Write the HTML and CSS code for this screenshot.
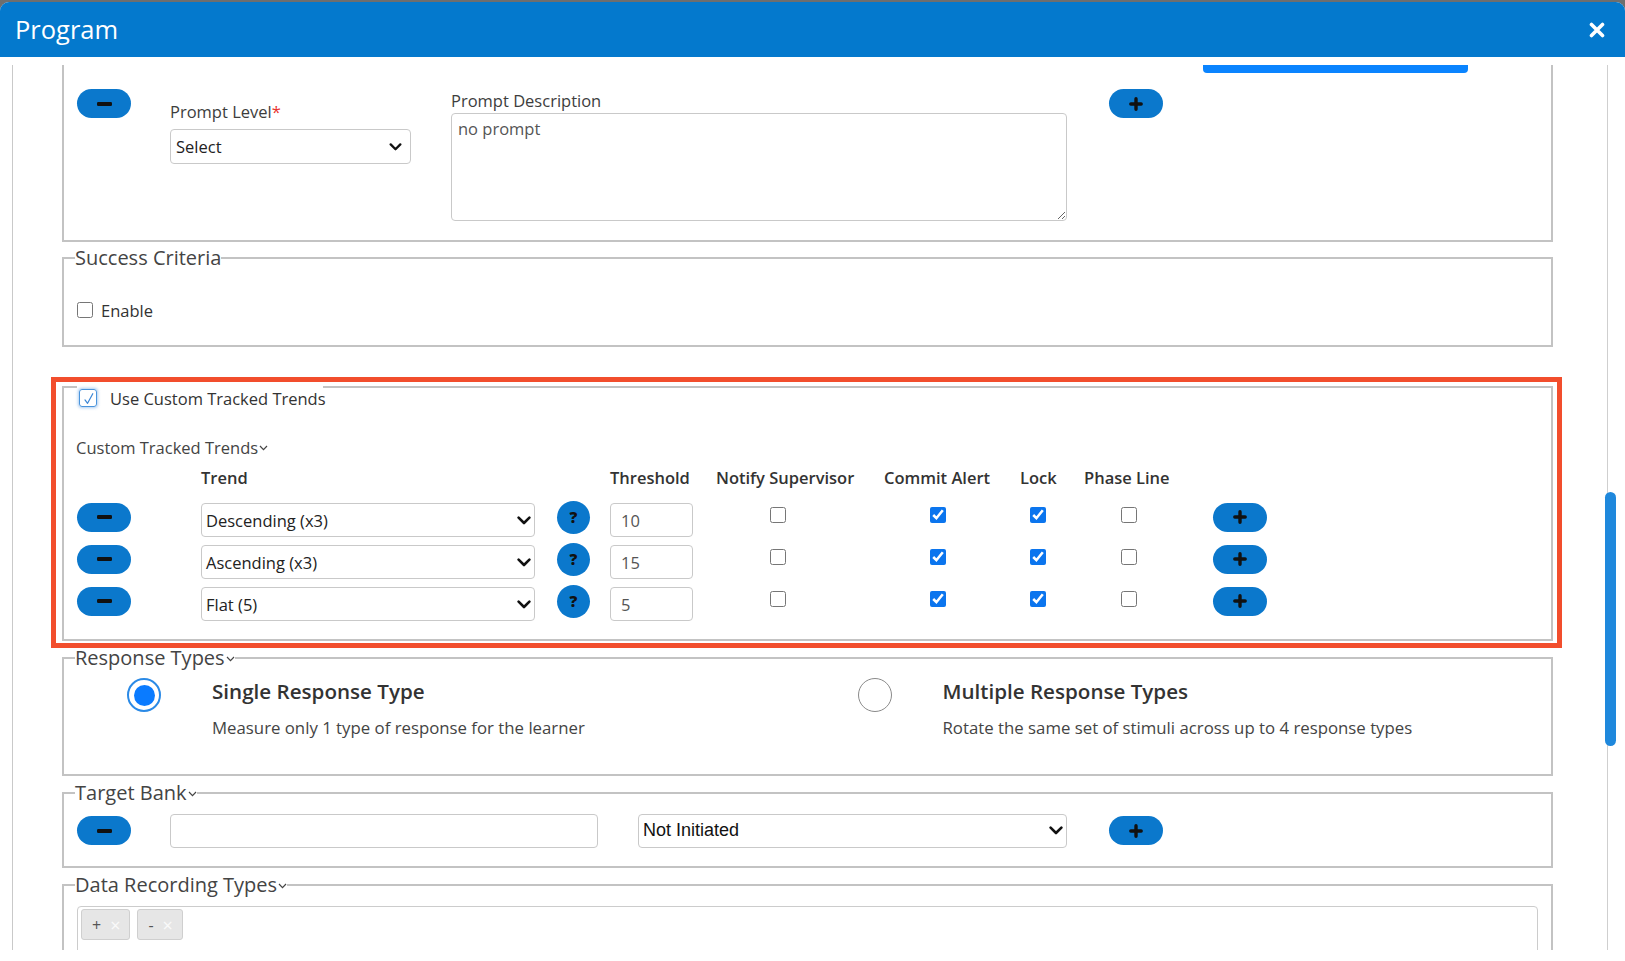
FILE: index.html
```html
<!DOCTYPE html>
<html lang="en">
<head>
<meta charset="utf-8">
<title>Program</title>
<link rel="stylesheet" href="styles.css">
</head>
<body>
<div class="modal">
  <header class="modal-header">
    <h1 class="modal-title">Program</h1>
    <button class="close-btn" aria-label="Close">
      <svg width="16" height="16" viewBox="0 0 16 16"><path d="M2.5 2.5 L13.5 13.5 M13.5 2.5 L2.5 13.5" stroke="#fff" stroke-width="3.6" stroke-linecap="round" fill="none"/></svg>
    </button>
  </header>
  <div class="modal-body">
    <div class="viewport">
      <div class="content">

        <fieldset class="fs fs-cut">
          <div class="prompt-row">
            <button class="pill-btn btn-minus-top"><svg class="ico" width="15" height="4" viewBox="0 0 15 4"><rect x="0" y="0" width="15" height="4" rx="1.2" fill="#111"/></svg></button>
            <div class="field field-level">
              <label class="field-label label-level">Prompt Level<span class="req">*</span></label>
              <div class="select select-level"><span>Select</span><svg width="13" height="8" viewBox="0 0 14 9"><path d="M1.6 1.6 L7 7 L12.4 1.6" stroke="#111" stroke-width="2.6" fill="none" stroke-linecap="round" stroke-linejoin="round"/></svg></div>
            </div>
            <div class="field field-desc">
              <label class="field-label label-desc">Prompt Description</label>
              <textarea class="textarea" readonly>no prompt</textarea>
            </div>
            <button class="pill-btn btn-plus-top"><svg class="ico" width="14" height="14" viewBox="0 0 14 14"><path d="M7 1.8 V12.2 M1.8 7 H12.2" stroke="#111" stroke-width="3.4" stroke-linecap="round" fill="none"/></svg></button>
            <div class="top-bar"></div>
          </div>
        </fieldset>

        <fieldset class="fs fs-success">
          <legend>Success Criteria</legend>
          <div class="check-row">
            <input type="checkbox" class="cb" id="enable">
            <label for="enable" class="check-label">Enable</label>
          </div>
        </fieldset>

        <div class="hl-wrap">
          <fieldset class="fs fs-trends">
            <legend class="legend-empty"></legend>
            <div class="use-row">
              <span class="cb-custom"><svg width="13" height="13" viewBox="0 0 14 14"><path d="M3.2 8.6 L6 12.2 L11.6 1.8" stroke="#3a86d6" stroke-width="1.3" fill="none" stroke-linecap="round" stroke-linejoin="round"/></svg></span>
              <span class="use-label">Use Custom Tracked Trends</span>
            </div>
            <div class="sub-title">Custom Tracked Trends<svg class="chev-sm" width="9" height="6" viewBox="0 0 9 6"><path d="M1 1 L4.5 4.6 L8 1" stroke="#444" stroke-width="1.2" fill="none"/></svg></div>

            <div class="trow thead">
              <span></span>
              <span class="th">Trend</span>
              <span></span>
              <span class="th">Threshold</span>
              <span class="th">Notify Supervisor</span>
              <span class="th">Commit Alert</span>
              <span class="th">Lock</span>
              <span class="th">Phase Line</span>
              <span></span>
            </div>

            <div class="trow trow-first">
              <button class="pill-btn"><svg width="15" height="4" viewBox="0 0 15 4"><rect width="15" height="4" rx="1.2" fill="#111"/></svg></button>
              <div class="select select-trend"><span>Descending (x3)</span><svg width="14" height="9" viewBox="0 0 14 9"><path d="M1.6 1.6 L7 7 L12.4 1.6" stroke="#111" stroke-width="2.6" fill="none" stroke-linecap="round" stroke-linejoin="round"/></svg></div>
              <span class="help">?</span>
              <input class="text-input thr" type="text" value="10" readonly>
              <span class="cbcell cb-notify"><input type="checkbox" class="cb"></span>
              <span class="cbcell cb-commit"><input type="checkbox" class="cb" checked></span>
              <span class="cbcell cb-lock"><input type="checkbox" class="cb" checked></span>
              <span class="cbcell cb-phase"><input type="checkbox" class="cb"></span>
              <button class="pill-btn"><svg width="14" height="14" viewBox="0 0 14 14"><path d="M7 1.8 V12.2 M1.8 7 H12.2" stroke="#111" stroke-width="3.4" stroke-linecap="round" fill="none"/></svg></button>
            </div>

            <div class="trow">
              <button class="pill-btn"><svg width="15" height="4" viewBox="0 0 15 4"><rect width="15" height="4" rx="1.2" fill="#111"/></svg></button>
              <div class="select select-trend"><span>Ascending (x3)</span><svg width="14" height="9" viewBox="0 0 14 9"><path d="M1.6 1.6 L7 7 L12.4 1.6" stroke="#111" stroke-width="2.6" fill="none" stroke-linecap="round" stroke-linejoin="round"/></svg></div>
              <span class="help">?</span>
              <input class="text-input thr" type="text" value="15" readonly>
              <span class="cbcell cb-notify"><input type="checkbox" class="cb"></span>
              <span class="cbcell cb-commit"><input type="checkbox" class="cb" checked></span>
              <span class="cbcell cb-lock"><input type="checkbox" class="cb" checked></span>
              <span class="cbcell cb-phase"><input type="checkbox" class="cb"></span>
              <button class="pill-btn"><svg width="14" height="14" viewBox="0 0 14 14"><path d="M7 1.8 V12.2 M1.8 7 H12.2" stroke="#111" stroke-width="3.4" stroke-linecap="round" fill="none"/></svg></button>
            </div>

            <div class="trow">
              <button class="pill-btn"><svg width="15" height="4" viewBox="0 0 15 4"><rect width="15" height="4" rx="1.2" fill="#111"/></svg></button>
              <div class="select select-trend"><span>Flat (5)</span><svg width="14" height="9" viewBox="0 0 14 9"><path d="M1.6 1.6 L7 7 L12.4 1.6" stroke="#111" stroke-width="2.6" fill="none" stroke-linecap="round" stroke-linejoin="round"/></svg></div>
              <span class="help">?</span>
              <input class="text-input thr" type="text" value="5" readonly>
              <span class="cbcell cb-notify"><input type="checkbox" class="cb"></span>
              <span class="cbcell cb-commit"><input type="checkbox" class="cb" checked></span>
              <span class="cbcell cb-lock"><input type="checkbox" class="cb" checked></span>
              <span class="cbcell cb-phase"><input type="checkbox" class="cb"></span>
              <button class="pill-btn"><svg width="14" height="14" viewBox="0 0 14 14"><path d="M7 1.8 V12.2 M1.8 7 H12.2" stroke="#111" stroke-width="3.4" stroke-linecap="round" fill="none"/></svg></button>
            </div>
          </fieldset>
        </div>

        <fieldset class="fs fs-resp">
          <legend>Response Types<svg class="chev-sm" width="9" height="6" viewBox="0 0 9 6"><path d="M1 1 L4.5 4.6 L8 1" stroke="#444" stroke-width="1.2" fill="none"/></svg></legend>
          <div class="resp-grid">
            <div class="resp-opt">
              <span class="radio radio-on"></span>
              <div class="resp-text">
                <div class="resp-title">Single Response Type</div>
                <div class="resp-desc">Measure only 1 type of response for the learner</div>
              </div>
            </div>
            <div class="resp-opt">
              <span class="radio"></span>
              <div class="resp-text">
                <div class="resp-title">Multiple Response Types</div>
                <div class="resp-desc">Rotate the same set of stimuli across up to 4 response types</div>
              </div>
            </div>
          </div>
        </fieldset>

        <fieldset class="fs fs-target">
          <legend>Target Bank<svg class="chev-sm" width="9" height="6" viewBox="0 0 9 6"><path d="M1 1 L4.5 4.6 L8 1" stroke="#444" stroke-width="1.2" fill="none"/></svg></legend>
          <div class="target-row">
            <button class="pill-btn"><svg width="15" height="4" viewBox="0 0 15 4"><rect width="15" height="4" rx="1.2" fill="#111"/></svg></button>
            <input class="text-input target-input" type="text" value="" readonly>
            <div class="select select-status"><span>Not Initiated</span><svg width="14" height="9" viewBox="0 0 14 9"><path d="M1.6 1.6 L7 7 L12.4 1.6" stroke="#111" stroke-width="2.6" fill="none" stroke-linecap="round" stroke-linejoin="round"/></svg></div>
            <button class="pill-btn btn-plus-target"><svg width="14" height="14" viewBox="0 0 14 14"><path d="M7 1.8 V12.2 M1.8 7 H12.2" stroke="#111" stroke-width="3.4" stroke-linecap="round" fill="none"/></svg></button>
          </div>
        </fieldset>

        <fieldset class="fs fs-data">
          <legend>Data Recording Types<svg class="chev-sm" width="9" height="6" viewBox="0 0 9 6"><path d="M1 1 L4.5 4.6 L8 1" stroke="#444" stroke-width="1.2" fill="none"/></svg></legend>
          <div class="tagbox">
            <span class="tag tag-plus">+<span class="tag-x">×</span></span>
            <span class="tag tag-minus">-<span class="tag-x">×</span></span>
          </div>
        </fieldset>

      </div>
      <div class="scrollbar"><div class="thumb"></div></div>
    </div>
  </div>
</div>
</body>
</html>
```

FILE: styles.css
```css
* { box-sizing: border-box; }

html, body { height: 100%; }

body {
  margin: 0;
  background: #6e6e6e;
  font-family: "Open Sans", "Noto Sans", sans-serif;
  color: #333;
  overflow: hidden;
}

.modal {
  margin-top: 2px;
  height: 959px;
  background: #fff;
  border-radius: 9px 9px 0 0;
  overflow: hidden;
}

.modal-header {
  height: 55px;
  background: #0479cd;
  display: flex;
  align-items: center;
  justify-content: space-between;
  padding: 0 20px 0 15px;
}

.modal-title {
  margin: 0;
  font-size: 25.5px;
  font-weight: 400;
  line-height: 1;
  color: #fff;
}

.close-btn {
  background: none;
  border: 0;
  padding: 0;
  width: 16px;
  height: 16px;
  display: flex;
}

.modal-body {
  padding: 8px 0 0 12px;
}

.viewport {
  display: flex;
  height: 885px;
  overflow: hidden;
  border-left: 1px solid #c9c9c9;
}

.content {
  flex: none;
  width: 1540px;
  padding-left: 49px;
}

/* scrollbar */
.scrollbar {
  position: relative;
  flex: none;
  width: 12px;
  margin-left: 52px;
}
.scrollbar::before {
  content: "";
  position: absolute;
  left: 2px;
  top: 0;
  bottom: 0;
  width: 1px;
  background: #cfcfcf;
}
.thumb {
  position: relative;
  margin-top: 427px;
  height: 254px;
  width: 11px;
  border-radius: 6px;
  background: #1f88dc;
}

/* fieldsets */
.fs {
  margin: 0;
  border: 2px solid #c3c3c3;
  padding: 0 13px;
  min-width: 0;
}
.fs legend {
  padding: 0;
  margin-left: -2px;
  font-size: 20px;
  line-height: 24px;
  color: #444;
}
.chev-sm {
  margin-left: 1px;
  vertical-align: 3px;
}

/* common controls */
.pill-btn {
  flex: none;
  width: 54px;
  height: 29px;
  border: 0;
  border-radius: 15px;
  background: #0b78cc;
  display: flex;
  align-items: center;
  justify-content: center;
  padding: 0;
}

.select {
  display: flex;
  align-items: center;
  justify-content: space-between;
  height: 34px;
  border: 1px solid #c9c9c9;
  border-radius: 4px;
  background: #fff;
  font-size: 16.5px;
  color: #222;
}

.text-input {
  height: 34px;
  border: 1px solid #c9c9c9;
  border-radius: 4px;
  font-family: inherit;
  font-size: 16.5px;
  color: #555;
  padding: 0 10px;
  outline: none;
  background: #fff;
}

.cb {
  width: 16px;
  height: 16px;
  margin: 0;
  accent-color: #0b75ee;
}

/* first (scrolled) fieldset */
.fs-cut {
  border-top: 0;
  padding-bottom: 19px;
}
.prompt-row {
  display: flex;
  align-items: flex-start;
}
.btn-minus-top { margin-top: 24px; }
.field { display: flex; flex-direction: column; }
.field-label {
  font-size: 16.5px;
  line-height: 22px;
  color: #3d3d3d;
}
.req { color: #e8322f; }
.field-level {
  width: 241px;
  margin-left: 39px;
  margin-top: 36px;
}
.label-level { margin-bottom: 6px; }
.select-level { padding: 0 8px 0 5px; height: 35px; }
.field-desc {
  width: 616px;
  margin-left: 40px;
  margin-top: 25px;
}
.label-desc { margin-bottom: 1px; }
.textarea {
  height: 108px;
  border: 1px solid #c9c9c9;
  border-radius: 4px;
  padding: 4px 6px;
  font-family: inherit;
  font-size: 16.5px;
  line-height: 22px;
  color: #555;
  resize: vertical;
  outline: none;
}
.btn-plus-top {
  margin-left: 42px;
  margin-top: 24px;
}
.top-bar {
  width: 265px;
  height: 8px;
  margin-left: 40px;
  background: #0a84ff;
  border-radius: 0 0 4px 4px;
}

/* success criteria */
.fs-success {
  margin-top: 4px;
  padding-top: 28px;
  padding-bottom: 23px;
}
.check-row {
  display: flex;
  align-items: center;
  height: 24px;
}
.check-label {
  margin-left: 8px;
  font-size: 16.5px;
  color: #333;
}

/* tracked trends */
.hl-wrap {
  position: relative;
  margin-top: 39px;
}
.hl-wrap::after {
  content: "";
  position: absolute;
  top: -9px;
  left: -11px;
  right: -9px;
  bottom: -7px;
  border: 5px solid #f24e2d;
  pointer-events: none;
}
.fs-trends { padding-bottom: 17px; }
.fs .legend-empty {
  width: 246px;
  height: 2px;
  margin-left: 0;
}
.use-row {
  display: flex;
  align-items: center;
  height: 20px;
}
.cb-custom {
  width: 18px;
  height: 18px;
  margin-left: 2px;
  border: 1.5px solid #4a94dc;
  border-radius: 3px;
  box-shadow: 0 0 3px 1px rgba(70, 145, 225, 0.45);
  display: flex;
  align-items: center;
  justify-content: center;
}
.use-label {
  margin-left: 13px;
  font-size: 16.5px;
  color: #333;
}
.sub-title {
  margin-top: 28px;
  margin-left: -1px;
  font-size: 16.5px;
  line-height: 24px;
  color: #444;
}
.trow {
  display: grid;
  grid-template-columns: 124px 356px 53px 106px 168px 136px 64px 129px 54px;
  align-items: center;
  height: 42px;
}
.thead {
  height: 24px;
  margin-top: 5px;
}
.trow-first { margin-top: 7px; }
.th {
  font-size: 16.5px;
  font-weight: 600;
  color: #333;
  white-space: nowrap;
}
.select-trend {
  width: 334px;
  margin-top: 6px;
  padding: 0 3px 0 4px;
}
.help {
  width: 33px;
  height: 33px;
  border-radius: 50%;
  background: #0b78cc;
  color: #111;
  font-weight: 800;
  font-size: 15.5px;
  display: flex;
  align-items: center;
  justify-content: center;
}
.thr {
  width: 83px;
  margin-top: 6px;
}
.cbcell {
  display: flex;
  margin-bottom: 4px;
}
.cb-notify { padding-left: 54px; }
.cb-commit { padding-left: 46px; }
.cb-lock { padding-left: 10px; }
.cb-phase { padding-left: 37px; }

/* response types */
.fs-resp {
  margin-top: 5px;
}
.resp-grid {
  display: grid;
  grid-template-columns: 1fr 1fr;
  padding-top: 8px;
  padding-bottom: 34px;
}
.resp-opt {
  display: flex;
  align-items: flex-start;
  padding-left: 50px;
}
.radio {
  flex: none;
  width: 34px;
  height: 34px;
  border-radius: 50%;
  border: 1.5px solid #8a8a8a;
  display: flex;
  align-items: center;
  justify-content: center;
}
.radio-on {
  border: 2px solid #2b8ae6;
}
.radio-on::before {
  content: "";
  width: 21px;
  height: 21px;
  border-radius: 50%;
  background: #0a7bff;
}
.resp-text { margin-left: 51px; }
.resp-title {
  font-size: 20.6px;
  font-weight: 600;
  line-height: 26px;
  color: #333;
}
.resp-desc {
  margin-top: 12px;
  font-size: 16.8px;
  line-height: 24px;
  color: #444;
}

/* target bank */
.fs-target {
  margin-top: 5px;
  padding-top: 8px;
  padding-bottom: 18px;
}
.target-row {
  display: flex;
  align-items: center;
  height: 35px;
}
.target-input {
  width: 428px;
  margin-left: 39px;
}
.select-status {
  width: 429px;
  margin-left: 40px;
  padding: 0 3px 0 4px;
  font-family: "Liberation Sans", Arial, sans-serif;
  font-size: 18px;
  color: #111;
}
.btn-plus-target { margin-left: 42px; }

/* data recording */
.fs-data {
  margin-top: 5px;
  padding-top: 9px;
  padding-bottom: 40px;
}
.tagbox {
  display: flex;
  gap: 7px;
  height: 80px;
  padding: 2px 3px;
  border: 1px solid #cccccc;
  border-radius: 4px;
  align-items: flex-start;
}
.tag {
  display: flex;
  align-items: center;
  height: 31px;
  padding: 0 9px 0 10px;
  gap: 9px;
  background: #e6e6e6;
  border: 1px solid #cfcfcf;
  border-radius: 3px;
  font-size: 16px;
  color: #555;
}
.tag-x {
  color: #fafafa;
  font-size: 18px;
}
```
